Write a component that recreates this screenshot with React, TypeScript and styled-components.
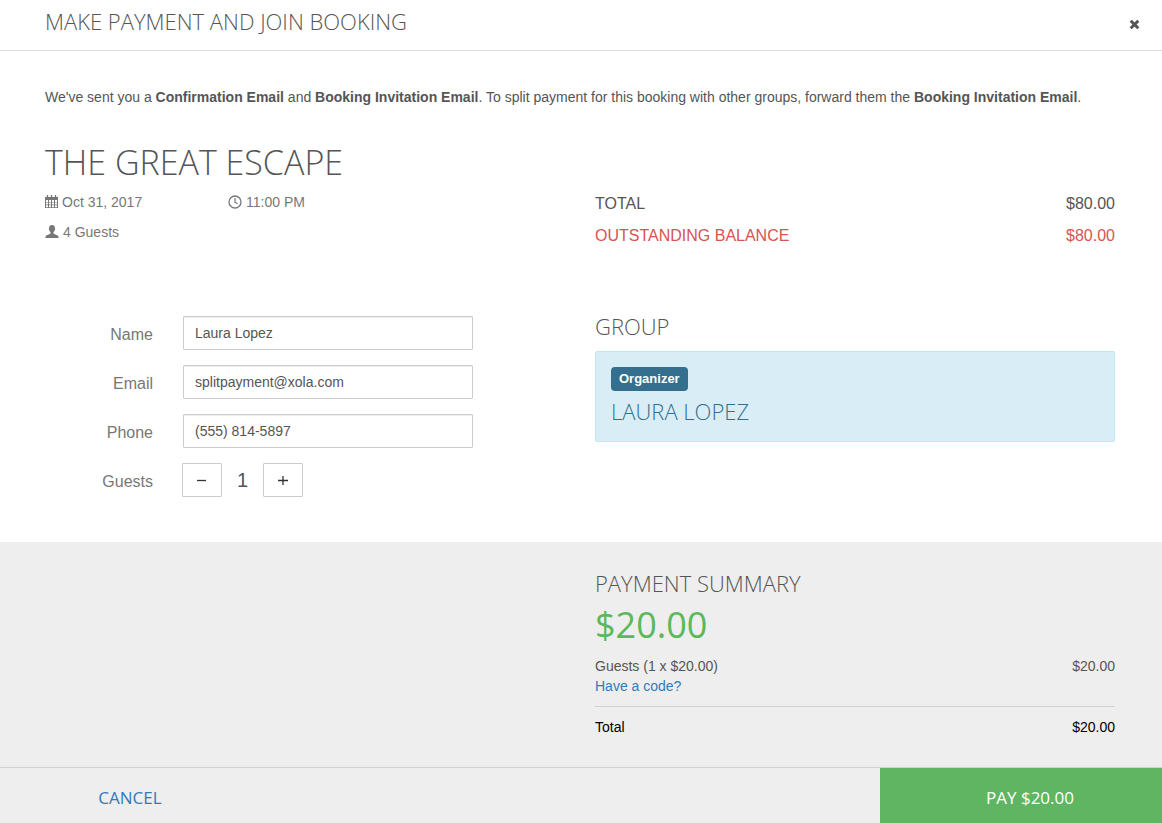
import React, { useState } from "react";
import styled, { createGlobalStyle } from "styled-components";

const GlobalStyle = createGlobalStyle`
  *, *::before, *::after { box-sizing: border-box; }
  body {
    margin: 0;
    background: #fff;
    color: #555;
    font-family: "Liberation Sans", Arial, sans-serif;
    font-size: 14px;
    line-height: 20px;
  }
  h1, h2, h3, p, dl, dd, ul { margin: 0; padding: 0; }
  ul { list-style: none; }
  button, input { font: inherit; color: inherit; }
`;

const display = `font-family: "Open Sans", Lato, sans-serif; text-transform: uppercase;`;

const Page = styled.div`
  min-height: 100vh;
  display: flex;
  flex-direction: column;
`;

const Header = styled.header`
  display: flex;
  align-items: center;
  justify-content: space-between;
  height: 51px;
  padding: 0 14px 8px 45px;
  border-bottom: 1px solid #ddd;
`;

const Heading = styled.h2`
  ${display}
  font-size: 22px;
  line-height: 24px;
  font-weight: 300;
`;

const CloseButton = styled.button`
  display: flex;
  padding: 8px;
  margin-top: 6px;
  border: 0;
  background: none;
  cursor: pointer;
`;

const Main = styled.main`
  flex: 1;
  padding: 36px 47px 45px 45px;
`;

const Title = styled.h1`
  ${display}
  margin-top: 35px;
  font-size: 34px;
  line-height: 40px;
  font-weight: 300;
`;

const Columns = styled.div`
  display: grid;
  grid-template-columns: 1fr 1fr;
  column-gap: 30px;
`;

const Facts = styled.ul`
  display: grid;
  grid-template-columns: 183px 1fr;
  row-gap: 10px;
  padding-top: 10px;
  align-content: start;
  color: #777;
`;

const Fact = styled.li`
  display: flex;
  align-items: center;
  gap: 3px;
`;

const Totals = styled.dl`
  padding-top: 10px;
  font-size: 16px;
`;

const TotalLine = styled.div<{ $due?: boolean }>`
  display: flex;
  justify-content: space-between;
  padding-bottom: 8px;
  line-height: 24px;
  color: ${(p) => (p.$due ? "#d9534f" : "#555")};
`;

const Details = styled(Columns)`
  margin-top: 58px;
`;

const Form = styled.form`
  display: flex;
  flex-direction: column;
  gap: 15px;
  padding-top: 2px;
`;

const Field = styled.div`
  display: grid;
  grid-template-columns: 108px 290px;
  column-gap: 30px;
  align-items: center;
`;

const Label = styled.label`
  padding-top: 4px;
  font-size: 16px;
  text-align: right;
  color: #777;
`;

const Input = styled.input`
  width: 100%;
  height: 34px;
  padding: 6px 11px;
  border: 1px solid #ccc;
  border-radius: 1px;
  background: #fff;
  box-shadow: inset 0 1px 1px rgba(0, 0, 0, 0.075);
`;

const Stepper = styled.div`
  display: flex;
  align-items: center;
  margin-left: -1px;
`;

const StepButton = styled.button`
  display: flex;
  align-items: center;
  justify-content: center;
  width: 40px;
  height: 34px;
  padding: 0;
  border: 1px solid #ccc;
  border-radius: 1px;
  background: #fff;
  color: #333;
  cursor: pointer;
`;

const Count = styled.output`
  width: 41px;
  font-size: 20px;
  text-align: center;
`;

const GroupCard = styled.div`
  margin-top: 13px;
  padding: 15px 15px 18px;
  border: 1px solid #bce8f1;
  border-radius: 2px;
  background: #d9edf7;
  color: #31708f;
`;

const Badge = styled.span`
  display: block;
  width: fit-content;
  padding: 0 8px;
  border-radius: 4px;
  background: #34708e;
  color: #fff;
  font-size: 13px;
  font-weight: 700;
  line-height: 24px;
`;

const Member = styled.h3`
  ${display}
  margin-top: 8px;
  font-size: 22px;
  line-height: 24px;
  font-weight: 300;
`;

const Summary = styled.section`
  padding: 29px 47px 30px 45px;
  background: #eee;
`;

const SummaryBody = styled.div`
  grid-column: 2;
`;

const Amount = styled.p`
  ${display}
  margin: 10px 0 11px;
  font-size: 36px;
  line-height: 40px;
  font-weight: 400;
  color: #5cb85c;
`;

const Line = styled.div`
  display: flex;
  justify-content: space-between;
`;

const GrandTotal = styled(Line)`
  margin-top: 10px;
  padding-top: 10px;
  border-top: 1px solid #d0d2d2;
  color: #000;
`;

const Link = styled.a`
  color: #337ab7;
  text-decoration: none;
`;

const Footer = styled.footer`
  display: flex;
  justify-content: space-between;
  height: 56px;
  border-top: 1px solid #d0d2d2;
  background: #eee;
`;

const CancelButton = styled.button`
  ${display}
  width: 260px;
  padding: 4px 0 0;
  border: 0;
  background: none;
  color: #337ab7;
  font-size: 17px;
  cursor: pointer;
`;

const PayButton = styled(CancelButton)`
  width: 282px;
  padding-left: 18px;
  background: #60b562;
  color: #fff;
`;

const CalendarIcon = () => (
  <svg width="14" height="14" viewBox="0 0 14 14" fill="#777" aria-hidden="true">
    <path
      fillRule="evenodd"
      d="M0 2h13v11H0zM1 5v2h2V5zM4 5v2h2V5zM7 5v2h2V5zM10 5v2h2V5zM1 7.600v2h2v-2zM4 7.600v2h2v-2zM7 7.600v2h2v-2zM10 7.600v2h2v-2zM1 10.200v2h2v-2zM4 10.200v2h2v-2zM7 10.200v2h2v-2zM10 10.200v2h2v-2z"
    />
    <path d="M1.800 0h1.400v3H1.800zM5.800 0h1.400v3H5.800zM9.800 0h1.400v3H9.800z" />
  </svg>
);

const ClockIcon = () => (
  <svg width="15" height="15" viewBox="0 0 15 15" fill="none" stroke="#777" aria-hidden="true">
    <circle cx="7" cy="7" r="6" strokeWidth="1.3" />
    <path d="M7 3v4.2l2.600 1.600" strokeWidth="1.2" />
  </svg>
);

const PersonIcon = () => (
  <svg width="15" height="14" viewBox="0 0 15 14" fill="#777" aria-hidden="true">
    <path d="M7 0C8.900 0 9.900 1.200 9.900 3c0 .4.300.500.300 1.100s-.400.800-.6 1.200c-.2.900-.6 1.500-1.100 2v1.200c.5.700 4.200 1.500 4.800 2.700.3.500.3 1.300.3 1.800H.4c0-.5 0-1.300.3-1.800C1.300 10 5 9.200 5.500 8.500V7.300c-.5-.5-.9-1.100-1.100-2-.2-.4-.6-.6-.6-1.200S4.100 3.400 4.100 3C4.100 1.200 5.100 0 7 0z" />
  </svg>
);

const CloseIcon = () => (
  <svg width="11" height="11" viewBox="0 0 11 11" fill="none" stroke="#555" aria-hidden="true">
    <path d="M1.700 1.700l7.600 7.600M9.300 1.700L1.700 9.300" strokeWidth="3" />
  </svg>
);

const StepIcon = ({ plus }: { plus?: boolean }) => (
  <svg width="11" height="11" viewBox="0 0 11 11" stroke="#333" aria-hidden="true">
    <path d={plus ? "M0 5.500h10M5 1v9" : "M0 5.500h9"} strokeWidth="1.300" />
  </svg>
);

const fields = [
  { id: "name", label: "Name", type: "text", value: "Laura Lopez" },
  { id: "email", label: "Email", type: "email", value: "splitpayment@xola.com" },
  { id: "phone", label: "Phone", type: "tel", value: "(555) 814-5897" },
];

export default function App() {
  const [guests, setGuests] = useState(1);
  const total = `$${(guests * 20).toFixed(2)}`;

  return (
    <Page>
      <GlobalStyle />
      <Header>
        <Heading>Make payment and join booking</Heading>
        <CloseButton type="button" aria-label="Close">
          <CloseIcon />
        </CloseButton>
      </Header>

      <Main>
        <p>
          We've sent you a <strong>Confirmation Email</strong> and{" "}
          <strong>Booking Invitation Email</strong>. To split payment for this booking with other
          groups, forward them the <strong>Booking Invitation Email</strong>.
        </p>
        <Title>The Great Escape</Title>
        <Columns>
          <Facts>
            <Fact><CalendarIcon />Oct 31, 2017</Fact>
            <Fact><ClockIcon />11:00 PM</Fact>
            <Fact><PersonIcon />4 Guests</Fact>
          </Facts>
          <Totals>
            <TotalLine><dt>TOTAL</dt><dd>$80.00</dd></TotalLine>
            <TotalLine $due><dt>OUTSTANDING BALANCE</dt><dd>$80.00</dd></TotalLine>
          </Totals>
        </Columns>

        <Details>
          <Form>
            {fields.map((f) => (
              <Field key={f.id}>
                <Label htmlFor={f.id}>{f.label}</Label>
                <Input id={f.id} type={f.type} defaultValue={f.value} />
              </Field>
            ))}
            <Field>
              <Label htmlFor="guests">Guests</Label>
              <Stepper>
                <StepButton type="button" aria-label="Fewer guests" onClick={() => setGuests(Math.max(1, guests - 1))}>
                  <StepIcon />
                </StepButton>
                <Count id="guests">{guests}</Count>
                <StepButton type="button" aria-label="More guests" onClick={() => setGuests(Math.min(4, guests + 1))}>
                  <StepIcon plus />
                </StepButton>
              </Stepper>
            </Field>
          </Form>
          <section>
            <Heading>Group</Heading>
            <GroupCard>
              <Badge>Organizer</Badge>
              <Member>Laura Lopez</Member>
            </GroupCard>
          </section>
        </Details>
      </Main>

      <Summary>
        <Columns>
          <SummaryBody>
            <Heading>Payment Summary</Heading>
            <Amount>{total}</Amount>
            <Line><span>Guests ({guests} x $20.00)</span><span>{total}</span></Line>
            <Link href="#code">Have a code?</Link>
            <GrandTotal><span>Total</span><span>{total}</span></GrandTotal>
          </SummaryBody>
        </Columns>
      </Summary>

      <Footer>
        <CancelButton type="button">Cancel</CancelButton>
        <PayButton type="button">Pay {total}</PayButton>
      </Footer>
    </Page>
  );
}
